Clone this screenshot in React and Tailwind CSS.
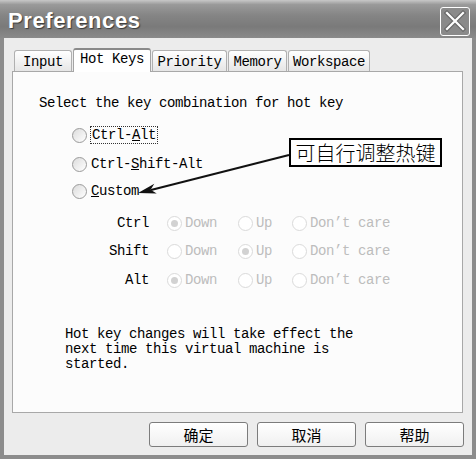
import React from 'react'

const mono = { fontFamily: '"Liberation Mono", "Courier New", monospace' }
const cjk = { fontFamily: '"Noto Sans CJK SC", "Noto Sans", sans-serif' }

const tabs = [
    { label: 'Input', w: 'w-[58px]' },
    { label: 'Hot Keys', w: 'w-[78px]', active: true },
    { label: 'Priority', w: 'w-[75px]' },
    { label: 'Memory', w: 'w-[59px]' },
    { label: 'Workspace', w: 'w-[82px]' },
]

const Radio = ({ disabled, checked }) => (
    <span
        className={`inline-flex items-center justify-center w-[15px] h-[15px] rounded-full border shrink-0 ${
            disabled
                ? 'border-[#dadada] bg-white'
                : 'border-[#9a9a9a] bg-gradient-to-br from-[#dcdcdc] to-white'
        }`}>
        {checked && (
            <span className="w-[7px] h-[7px] rounded-full bg-[#d2d2d2]" />
        )}
    </span>
)

const mods = [
    { label: 'Ctrl', sel: 0 },
    { label: 'Shift', sel: 1 },
    { label: 'Alt', sel: 0 },
]

const App = () => {
    return (
        <div
            className="relative w-[476px] h-[459px] flex flex-col overflow-hidden text-black"
            style={mono}>
            {/* title bar */}
            <div className="h-[38px] flex items-center justify-between pl-[8px] pr-[6px] bg-[linear-gradient(to_bottom,#c8c8c8_0%,#9a9a9a_12%,#858585_40%,#7a7a7a_70%,#8a8a8a_100%)]">
                <span
                    className="text-white font-bold text-[22px] tracking-[0.6px] [text-shadow:1px_1px_1px_#3a3a3a] pt-[2px]"
                    style={{ fontFamily: '"Liberation Sans", Arial, sans-serif' }}>
                    Preferences
                </span>
                <div className="w-[30px] h-[29px] mt-[4px] border border-white rounded-[3px] bg-[#8a8a8a] flex items-center justify-center">
                    <svg width="22" height="22" viewBox="0 0 22 22">
                        <path
                            d="M3 3 L19 19 M19 3 L3 19"
                            stroke="#6a6a6a"
                            strokeWidth="4.5"
                            strokeLinecap="square"
                        />
                        <path
                            d="M3 3 L19 19 M19 3 L3 19"
                            stroke="#ffffff"
                            strokeWidth="2.2"
                            strokeLinecap="square"
                        />
                    </svg>
                </div>
            </div>

            {/* body */}
            <div className="flex-1 flex flex-col bg-[#ececec] border-x-[4px] border-b-[4px] border-[#8c8c8c] pl-[8px] pr-[9px] pt-[10px] pb-[8px]">
                <div className="flex items-end h-[23px] pl-[2px] gap-[1px]">
                    {tabs.map(t => (
                        <div
                            key={t.label}
                            className={`${t.w} flex items-center justify-center border border-b-0 rounded-t-[3px] text-[14px] tracking-[-0.4px] ${
                                t.active
                                    ? 'relative z-10 h-[24px] -mb-px bg-white border-[#a4a4a4] border-t-[2px] border-t-[#8a8a8a] pb-[3px]'
                                    : 'h-[21px] bg-gradient-to-b from-white to-[#e6e6e6] border-[#b0b0b0] pt-[2px]'
                            }`}>
                            {t.label}
                        </div>
                    ))}
                </div>

                {/* panel */}
                <div className="h-[342px] bg-[#fcfcfc] border border-[#a8a8a8] pl-[26px] pt-[24px] text-[14px] tracking-[-0.4px] leading-[15px]">
                    <div>Select the key combination for hot key</div>

                    <div className="ml-[33px] mt-[15px] flex flex-col">
                        <div className="flex items-center h-[18px] gap-[3px]">
                            <Radio />
                            <span className="border border-dotted border-[#333] px-[1px] leading-[16px]">
                                Ctrl-<span className="underline">A</span>lt
                            </span>
                        </div>
                        <div className="flex items-center h-[18px] gap-[4px] mt-[11px]">
                            <Radio />
                            <span>
                                Ctrl-<span className="underline">S</span>hift-Alt
                            </span>
                        </div>
                        <div className="flex items-center h-[18px] gap-[4px] mt-[9px]">
                            <Radio />
                            <span>
                                <span className="underline">C</span>ustom
                            </span>
                        </div>
                    </div>

                    <div className="mt-[14px] flex flex-col">
                        {mods.map((m, i) => (
                            <div
                                key={m.label}
                                className={`flex items-center h-[18px] ${
                                    i === 1 ? 'mt-[10px]' : i === 2 ? 'mt-[11px]' : ''
                                }`}>
                                <span className="w-[111px] text-right pr-[1px]">
                                    {m.label}
                                </span>
                                <div className="ml-[17px] flex items-center text-[#bdbdbd]">
                                    <div className="w-[71px] flex items-center gap-[3px]">
                                        <Radio disabled checked={m.sel === 0} />
                                        <span>Down</span>
                                    </div>
                                    <div className="w-[54px] flex items-center gap-[3px]">
                                        <Radio disabled checked={m.sel === 1} />
                                        <span>Up</span>
                                    </div>
                                    <div className="flex items-center gap-[3px]">
                                        <Radio disabled />
                                        <span>Don’t care</span>
                                    </div>
                                </div>
                            </div>
                        ))}
                    </div>

                    <div className="ml-[26px] mt-[38px]">
                        <div>Hot key changes will take effect the</div>
                        <div>next time this virtual machine is</div>
                        <div>started.</div>
                    </div>
                </div>

                {/* buttons */}
                <div className="mt-[9px] -mr-[1px] flex justify-end gap-[9px]" style={cjk}>
                    {['确定', '取消', '帮助'].map(b => (
                        <button
                            key={b}
                            className="w-[99px] h-[25px] rounded-[3px] border border-[#7c7c7c] bg-gradient-to-b from-white to-[#f0f0f0] text-[15px] leading-none flex items-center justify-center">
                            {b}
                        </button>
                    ))}
                </div>
            </div>

            {/* annotation callout */}
            <div
                className="absolute left-[289px] top-[138px] w-[153px] h-[29px] border-2 border-black bg-white flex items-center justify-center text-[20px] leading-none font-light"
                style={cjk}>
                可自行调整热键
            </div>
            <svg
                className="absolute left-0 top-0 pointer-events-none"
                width="476"
                height="459"
                viewBox="0 0 476 459">
                <line
                    x1="289"
                    y1="155"
                    x2="151"
                    y2="190"
                    stroke="#111"
                    strokeWidth="2"
                />
                <polygon
                    points="138,193 154.3,183.7 150.6,189.8 156.7,193.4"
                    fill="#111"
                />
            </svg>
        </div>
    )
}

export default App
